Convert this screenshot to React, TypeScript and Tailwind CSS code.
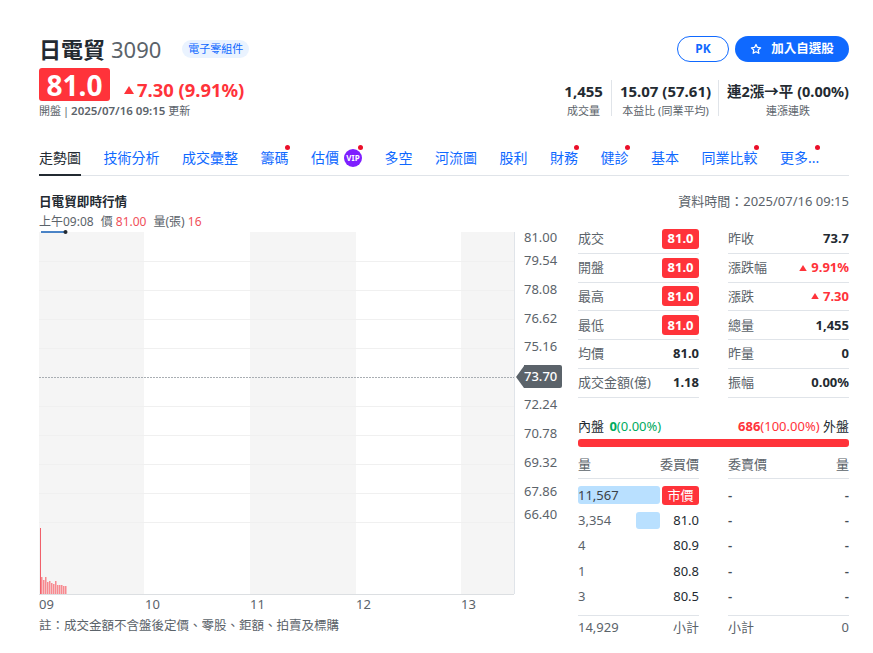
import React from "react";

const FONT = { fontFamily: '"Noto Sans","Noto Sans CJK TC",sans-serif' };

const tabs: { t: string; dot?: boolean; vip?: boolean }[] = [
  { t: "技術分析" },
  { t: "成交彙整" },
  { t: "籌碼", dot: true },
  { t: "估價", dot: true, vip: true },
  { t: "多空" },
  { t: "河流圖" },
  { t: "股利" },
  { t: "財務", dot: true },
  { t: "健診", dot: true },
  { t: "基本" },
  { t: "同業比較", dot: true },
  { t: "更多...", dot: true },
];

function Up({ className }: { className: string }) {
  return (
    <svg viewBox="0 0 10 8" className={className}>
      <path d="M5 0 L10 8 L0 8 Z" fill="#ff333a" />
    </svg>
  );
}

function Badge({ v }: { v: string }) {
  return <span className="flex h-[20px] w-[37px] items-center justify-center rounded-[3px] bg-[#ff333a] text-[13px] font-bold text-white">{v}</span>;
}

function Row({ label, children }: { label: string; children: React.ReactNode }) {
  return (
    <div className="flex h-[28.8px] items-center justify-between border-b border-[#e0e4e9] text-[13px] text-[#5b636a]">
      <span>{label}</span>
      {children}
    </div>
  );
}

const V = ({ v }: { v: string }) => <span className="font-bold text-[#232a31]">{v}</span>;
const R = ({ v, w }: { v: string; w: string }) => (
  <span className="flex items-center gap-[4px] font-bold text-[#ff333a]">
    <Up className={w} />
    {v}
  </span>
);

const yLabels: [string, number][] = [
  ["81.00", 242],
  ["79.54", 265],
  ["78.08", 294],
  ["76.62", 323],
  ["75.16", 351],
  ["72.24", 409],
  ["70.78", 438],
  ["69.32", 467],
  ["67.86", 496],
  ["66.40", 519],
];
const vols = [17, 14, 17, 12, 13, 11, 10, 13, 9, 9, 9, 8, 8];

function Chart() {
  return (
    <div className="relative h-[384px] w-[529px] shrink-0">
      <svg width="529" height="384" viewBox="39 232 529 384" className="block overflow-visible" style={{ fontFamily: FONT.fontFamily }}>
        <rect x="39" y="232" width="105" height="362" fill="#f5f5f5" />
        <rect x="250" y="232" width="106" height="362" fill="#f5f5f5" />
        <rect x="461" y="232" width="53" height="362" fill="#f5f5f5" />
        {[261, 290, 319, 348, 406, 435, 464, 493, 522].map((y) => (
          <line key={y} x1="39" x2="514" y1={y + 0.5} y2={y + 0.5} stroke="#f0f0f0" />
        ))}
        <line x1="39" x2="514" y1="377.5" y2="377.5" stroke="#a9aeb3" strokeDasharray="2 1" />
        <line x1="514.5" x2="514.5" y1="232" y2="594" stroke="#e0e4e9" />
        <line x1="39" x2="514" y1="594.5" y2="594.5" stroke="#dcdfe2" />
        <rect x="40" y="528" width="1" height="66" fill="#f0606a" />
        {vols.map((h, i) => (
          <rect key={i} x={41 + i * 2} y={594 - h} width="1.5" height={h} fill="#f78a90" />
        ))}
        <line x1="41" x2="65" y1="232" y2="232" stroke="#0f5bb5" strokeWidth="1.5" />
        <circle cx="65.5" cy="232" r="2" fill="#232a31" />
        {yLabels.map(([t, y]) => (
          <text key={t} x="524" y={y} fontSize="13" fill="#5b636a">{t}</text>
        ))}
        {[["09", 39], ["10", 145], ["11", 250], ["12", 356], ["13", 461]].map(([t, x]) => (
          <text key={t} x={x} y="609" fontSize="13" fill="#5b636a">{t}</text>
        ))}
      </svg>
      <div className="absolute left-[477px] top-[133px] flex h-[23px] items-center">
        <span className="h-0 w-0 border-y-[11.5px] border-r-[8px] border-y-transparent border-r-[#5b636a]" />
        <span className="flex h-[23px] w-[38px] items-center rounded-r-[2px] bg-[#5b636a] text-[13px] font-medium text-white">73.70</span>
      </div>
    </div>
  );
}

const book: [string, string, number][] = [
  ["3,354", "81.0", 24],
  ["4", "80.9", 0],
  ["1", "80.8", 0],
  ["3", "80.5", 0],
];

export default function App() {
  return (
    <div lang="zh-Hant" className="h-[653px] w-[873px] overflow-hidden bg-white pl-[39px] pr-[24px] pt-[33px] text-[#232a31]" style={FONT}>
      {/* header */}
      <div className="flex h-[32px] items-center justify-between">
        <div className="flex items-center">
          <span className="text-[22px] font-bold leading-[32px]">日電貿</span>
          <span className="ml-[6px] text-[22px] leading-[32px] text-[#5b636a]">3090</span>
          <span className="ml-[21px] flex h-[18px] items-center rounded-full bg-[#eaf3ff] px-[6px] text-[11px] text-[#0f69ff]">電子零組件</span>
        </div>
        <div className="flex items-center gap-[6px]">
          <span className="flex h-[26px] w-[52px] items-center justify-center rounded-full border border-[#0f69ff] text-[12px] font-bold text-[#0f69ff]">PK</span>
          <span className="flex h-[26px] w-[114px] items-center justify-center gap-[9px] rounded-full bg-[#0f69ff] text-[12.5px] font-bold text-white">
            <svg viewBox="0 0 24 24" className="h-[12px] w-[12px]" fill="none" stroke="white" strokeWidth="2.6" strokeLinejoin="round">
              <path d="M12 3l2.8 5.9 6.4.8-4.7 4.4 1.2 6.4L12 17.4l-5.7 3.1 1.2-6.4L2.8 9.7l6.4-.8z" />
            </svg>
            加入自選股
          </span>
        </div>
      </div>

      {/* price + stats */}
      <div className="mt-[3px] flex justify-between">
        <div>
          <div className="flex h-[33px] items-start">
            <span className="flex h-[33px] w-[71px] items-center justify-center rounded-[3px] bg-[#ff333a] text-[28px] font-bold text-white">81.0</span>
            <span className="ml-[14px] mt-[9px] flex h-[26px] items-center text-[18.4px] font-bold leading-[26px] text-[#ff333a]">
              <Up className="mr-[3px] h-[8px] w-[10px]" />
              7.30 (9.91%)
            </span>
          </div>
          <div className="mt-[1px] text-[11px] leading-[18px] text-[#5b636a]">
            開盤<span className="mx-[2px]">|</span><span className="text-[11.5px] font-semibold">2025/07/16 09:15</span> 更新
          </div>
        </div>
        <div className="mt-[12px] flex h-[36px] items-start">
          <div className="flex flex-col items-center pr-[8px]">
            <span className="mt-[1px] text-[15px] font-bold leading-[20px]">1,455</span>
            <span className="mt-[1px] text-[11px] leading-[18px] text-[#5b636a]">成交量</span>
          </div>
          <div className="flex h-[36px] flex-col items-center border-l border-[#e0e4e9] pl-[8px] pr-[7px]">
            <span className="mt-[1px] text-[15px] font-bold leading-[20px]">15.07 (57.61)</span>
            <span className="mt-[1px] text-[11px] leading-[18px] text-[#5b636a]">本益比 (同業平均)</span>
          </div>
          <div className="flex h-[36px] flex-col items-center border-l border-[#e0e4e9] pl-[8px]">
            <span className="mt-[1px] text-[14.5px] font-bold leading-[20px]">連2漲→平 (0.00%)</span>
            <span className="mt-[1px] text-[11px] leading-[18px] text-[#5b636a]">連漲連跌</span>
          </div>
        </div>
      </div>

      {/* tabs */}
      <div className="mt-[19px] flex h-[37px] items-start gap-[22.5px] border-b border-[#e0e4e9] text-[14px] leading-[38px]">
        <span className="h-[37px] border-b-[2px] border-[#232a31]">走勢圖</span>
        {tabs.map((x) => (
          <span key={x.t} className="relative flex items-center text-[#0f69ff]">
            {x.t}
            {x.vip && (
              <span className="ml-[5px] flex h-[18px] w-[18px] items-center justify-center rounded-full bg-[#7e1fff] text-[8px] font-bold leading-none text-white">VIP</span>
            )}
            {x.dot && <span className="absolute right-[-1px] top-[6px] h-[5px] w-[5px] rounded-full bg-[#eb0f29]" />}
          </span>
        ))}
      </div>

      {/* section title */}
      <div className="mt-[16px] flex h-[20px] items-center justify-between">
        <span className="text-[12.6px] font-bold">日電貿即時行情</span>
        <span className="text-[13px] text-[#5b636a]">資料時間：2025/07/16 09:15</span>
      </div>
      <div className="mt-[1px] flex h-[18px] items-center text-[12px] text-[#5b636a]">
        <span>上午09:08</span>
        <span className="ml-[7px]">價 <span className="text-[#f0505a]">81.00</span></span>
        <span className="ml-[7px]">量(張) <span className="text-[#f0505a]">16</span></span>
      </div>

      {/* body */}
      <div className="mt-[1px] flex">
        <div className="shrink-0">
          <Chart />
          <div className="text-[12.5px] leading-[20px] text-[#5b636a]">註：成交金額不含盤後定價、零股、鉅額、拍賣及標購</div>
        </div>
        <div className="ml-[10px] w-[271px] -mt-[7px]">
          <div className="flex justify-between">
            <div className="w-[121px]">
              <Row label="成交"><Badge v="81.0" /></Row>
              <Row label="開盤"><Badge v="81.0" /></Row>
              <Row label="最高"><Badge v="81.0" /></Row>
              <Row label="最低"><Badge v="81.0" /></Row>
              <Row label="均價"><V v="81.0" /></Row>
              <Row label="成交金額(億)"><V v="1.18" /></Row>
            </div>
            <div className="w-[121px]">
              <Row label="昨收"><V v="73.7" /></Row>
              <Row label="漲跌幅"><R v="9.91%" w="h-[6px] w-[8px]" /></Row>
              <Row label="漲跌"><R v="7.30" w="h-[6px] w-[8px]" /></Row>
              <Row label="總量"><V v="1,455" /></Row>
              <Row label="昨量"><V v="0" /></Row>
              <Row label="振幅"><V v="0.00%" /></Row>
            </div>
          </div>

          <div className="mt-[19px] flex h-[20px] items-center justify-between text-[13px]">
            <span>
              內盤 <span className="ml-[2px] font-bold text-[#00ab5e]">0</span>
              <span className="text-[#00ab5e]">(0.00%)</span>
            </span>
            <span>
              <span className="font-bold text-[#ff333a]">686</span>
              <span className="text-[#ff333a]">(100.00%)</span> 外盤
            </span>
          </div>
          <div className="mt-[2px] h-[8px] rounded-[3px] bg-[#ff333a]" />

          <div className="mt-[9px] flex justify-between text-[13px] text-[#5b636a]">
            <div className="flex h-[23px] w-[121px] items-center justify-between border-b border-[#e0e4e9] pb-[4px]">
              <span>量</span>
              <span>委買價</span>
            </div>
            <div className="flex h-[23px] w-[121px] items-center justify-between border-b border-[#e0e4e9] pb-[4px]">
              <span>委賣價</span>
              <span>量</span>
            </div>
          </div>

          <div className="mt-[4px] flex justify-between text-[13px]">
            <div className="w-[121px]">
              <div className="flex h-[25.3px] items-center">
                <span className="flex h-[18px] w-[82px] items-center rounded-[3px] bg-[#b9e0ff] text-[#3a4148]">11,567</span>
                <span className="ml-[2px] flex h-[19px] w-[37px] items-center justify-center rounded-[3px] bg-[#ff333a] text-[13px] text-white">市價</span>
              </div>
              {book.map(([q, p, w]) => (
                <div key={p} className="flex h-[25.3px] items-center">
                  <span className="flex h-[18px] w-[82px] items-center justify-between text-[#5b636a]">
                    {q}
                    {w > 0 && <span className="h-[17px] w-[24px] rounded-[3px] bg-[#b9e0ff]" />}
                  </span>
                  <span className="ml-auto text-[#232a31]">{p}</span>
                </div>
              ))}
            </div>
            <div className="w-[121px] font-semibold text-[#464e56]">
              {[0, 1, 2, 3, 4].map((i) => (
                <div key={i} className="flex h-[25.3px] items-center justify-between">
                  <span>-</span>
                  <span>-</span>
                </div>
              ))}
            </div>
          </div>

          <div className="mt-[6px] flex justify-between text-[13px] text-[#5b636a]">
            <div className="flex h-[24px] w-[121px] items-center justify-between border-t border-[#e0e4e9]">
              <span>14,929</span>
              <span>小計</span>
            </div>
            <div className="flex h-[24px] w-[121px] items-center justify-between border-t border-[#e0e4e9]">
              <span>小計</span>
              <span>0</span>
            </div>
          </div>
        </div>
      </div>
    </div>
  );
}
